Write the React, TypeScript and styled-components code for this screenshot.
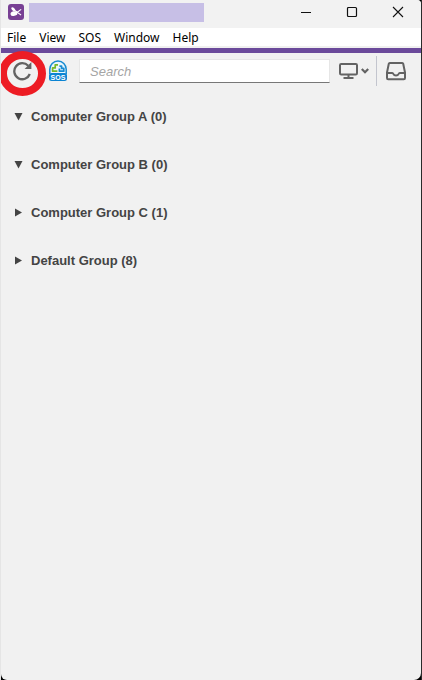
import React, { useState } from "react";
import styled, { createGlobalStyle } from "styled-components";

const GlobalStyle = createGlobalStyle`
  * { box-sizing: border-box; }
  body { margin: 0; background: #000; }
  button, input { font: inherit; color: inherit; }
`;

const Desktop = styled.div`
  min-height: 100vh;
  display: flex;
  background: #000;
  border-left: 1px solid #e5e5e5;
  border-right: 1px solid #2b2b2b;
`;

const AppWindow = styled.div`
  flex: 1;
  min-width: 0;
  display: flex;
  flex-direction: column;
  overflow: hidden;
  background: #f1f1f1;
  border-radius: 0 4px 7px 6px;
  font-family: "Liberation Sans", Arial, sans-serif;
  font-size: 13px;
  color: #444;
`;

const TitleBar = styled.header`
  display: flex;
  align-items: flex-start;
  height: 28px;
  padding-left: 7px;
  background: #f2f2f2;
`;

const AppLogo = styled.svg`
  flex: none;
  width: 16px;
  height: 16px;
  margin-top: 4px;
`;

const TitleMask = styled.div`
  flex: 0 1 175px;
  height: 19px;
  margin: 3px auto 0 5px;
  background: #c7bfe6;
`;

const CaptionButton = styled.button`
  flex: none;
  display: grid;
  place-items: center;
  width: 46px;
  height: 24px;
  padding: 0;
  border: 0;
  background: transparent;
  color: #111;
`;

const MenuBar = styled.nav`
  display: flex;
  gap: 13px;
  height: 20px;
  padding-left: 6px;
  background: #fff;
  border-bottom: 2px solid #f0f0f0;
`;

const MenuButton = styled.button`
  padding: 2px 0 0;
  border: 0;
  background: transparent;
  color: #000;
  font: 12px/16px "Noto Sans", "Open Sans", sans-serif;
`;

const AccentLine = styled.div`
  height: 5px;
  background: #6b4a9b;
`;

const Toolbar = styled.div`
  display: flex;
  align-items: center;
  height: 36px;
  padding: 0 13px 0 10px;
`;

const ToolButton = styled.button<{ $width: number }>`
  position: relative;
  flex: none;
  display: flex;
  align-items: center;
  justify-content: center;
  gap: 3px;
  width: ${(p) => p.$width}px;
  height: 30px;
  padding: 0;
  border: 0;
  background: transparent;
  color: #636363;
  & + & { margin-left: 6px; }
`;

const HighlightRing = styled.svg`
  position: absolute;
  left: -13px;
  top: -7px;
  width: 50px;
  height: 50px;
  pointer-events: none;
`;

const SearchBox = styled.input`
  flex: 1;
  min-width: 0;
  height: 24px;
  margin: 0 8px 0 4px;
  padding: 0 10px;
  border: 1px solid #e6e6e6;
  border-bottom-color: #777;
  border-radius: 0;
  background: #fff;
  outline: 0;
  &::placeholder { color: #a5a5a5; opacity: 1; font-style: italic; }
`;

const Divider = styled.div`
  width: 1px;
  height: 30px;
  margin: 0 7px 0 6px;
  background: #c3c5ce;
`;

const GroupList = styled.ul`
  flex: 1;
  margin: 0;
  padding: 3px 0;
  list-style: none;
`;

const GroupRow = styled.button`
  display: flex;
  align-items: center;
  gap: 8px;
  width: 100%;
  height: 48px;
  padding: 0 13px;
  border: 0;
  background: transparent;
  font-weight: bold;
  text-align: left;
`;

const Arrow = styled.svg`
  flex: none;
  width: 9px;
  height: 9px;
  fill: #444;
`;

const menus = ["File", "View", "SOS", "Window", "Help"];

const initialGroups = [
  { name: "Computer Group A", count: 0, open: true },
  { name: "Computer Group B", count: 0, open: true },
  { name: "Computer Group C", count: 1, open: false },
  { name: "Default Group", count: 8, open: false },
];

function Logo() {
  return (
    <AppLogo viewBox="0 0 16 16" aria-hidden="true">
      <rect width="16" height="16" rx="3" fill="#784094" />
      <ellipse cx="5.3" cy="5.2" rx="2.4" ry="1.4" transform="rotate(42 5.3 5.2)" fill="#fff" />
      <ellipse cx="6" cy="9.6" rx="3.5" ry="2.3" transform="rotate(-14 6 9.6)" fill="#fff" />
      <path d="M6.5 6.2l2.8 2L12.8 5.6M9.3 8.4l3.4 2.4" fill="none" stroke="#fff" strokeWidth="1.1" strokeLinecap="round" />
    </AppLogo>
  );
}

function RefreshIcon() {
  return (
    <svg width="20" height="20" viewBox="0 0 20 20" aria-hidden="true">
      <path d="M15.2 4.8A8 8 0 1 0 16.8 13" fill="none" stroke="currentColor" strokeWidth="2.3" />
      <path d="M18.4 1v7H11.6z" fill="currentColor" />
    </svg>
  );
}

function SosIcon() {
  return (
    <svg width="20" height="22" viewBox="0 0 20 22" aria-hidden="true">
      <path d="M1.8 14V9.3a8.2 8.2 0 0 1 16.4 0V14" fill="#e9f5fc" stroke="#168bd2" strokeWidth="1.5" />
      <path d="M10 4.8H7.2v3.1H4.6v3.3H9.4" fill="none" stroke="#76b82a" strokeWidth="1.7" strokeLinejoin="round" />
      <path d="M11.4 6.2h2.2v2.2h2.2v2.8h-4.4V8.6" fill="none" stroke="#168bd2" strokeWidth="1.7" strokeLinejoin="round" />
      <rect x="1" y="13" width="18" height="8" rx="2.5" fill="#0b84d3" />
      <text x="10" y="19.6" textAnchor="middle" fontFamily="Liberation Sans, sans-serif" fontWeight="bold" fontSize="7" fill="#fff">SOS</text>
    </svg>
  );
}

function MonitorIcon() {
  return (
    <svg width="19" height="18" viewBox="0 0 19 18" aria-hidden="true">
      <rect x="1" y="2" width="17" height="10.5" rx="1.2" fill="none" stroke="currentColor" strokeWidth="2" />
      <path d="M9.5 12v4M4.5 16h10" fill="none" stroke="currentColor" strokeWidth="2" />
    </svg>
  );
}

function ChevronIcon() {
  return (
    <svg width="8" height="6" viewBox="0 0 8 6" aria-hidden="true">
      <path d="M.8 1L4 4.2 7.2 1" fill="none" stroke="currentColor" strokeWidth="2.2" />
    </svg>
  );
}

function InboxIcon() {
  return (
    <svg width="22" height="20" viewBox="0 0 22 20" aria-hidden="true">
      <path d="M4.8 2h12.4a1 1 0 0 1 1 .8L20 11.5V17a1.2 1.2 0 0 1-1.2 1.2H3.2A1.2 1.2 0 0 1 2 17v-5.5L3.8 2.8a1 1 0 0 1 1-.8z" fill="none" stroke="currentColor" strokeWidth="2" strokeLinejoin="round" />
      <path d="M2 12h5.3c.6 0 .8.4 1 .9a3 3 0 0 0 5.4 0c.2-.5.4-.9 1-.9H20" fill="none" stroke="currentColor" strokeWidth="2" />
    </svg>
  );
}

export default function App() {
  const [groups, setGroups] = useState(initialGroups);
  const toggle = (name: string) =>
    setGroups((list) => list.map((g) => (g.name === name ? { ...g, open: !g.open } : g)));

  return (
    <>
      <GlobalStyle />
      <Desktop>
        <AppWindow>
          <TitleBar>
            <Logo />
            <TitleMask />
            <CaptionButton aria-label="Minimize">
              <svg width="12" height="12" viewBox="0 0 12 12">
                <path d="M1 6.5h10" stroke="currentColor" />
              </svg>
            </CaptionButton>
            <CaptionButton aria-label="Maximize">
              <svg width="12" height="12" viewBox="0 0 12 12">
                <rect x="1.5" y="1.5" width="9" height="9" rx="1" fill="none" stroke="currentColor" strokeWidth="1.2" />
              </svg>
            </CaptionButton>
            <CaptionButton aria-label="Close">
              <svg width="12" height="12" viewBox="0 0 12 12">
                <path d="M1 1l10 10M11 1L1 11" stroke="currentColor" strokeWidth="1.1" />
              </svg>
            </CaptionButton>
          </TitleBar>
          <MenuBar>
            {menus.map((m) => (
              <MenuButton key={m}>{m}</MenuButton>
            ))}
          </MenuBar>
          <AccentLine />
          <Toolbar>
            <ToolButton $width={24} aria-label="Refresh">
              <RefreshIcon />
              <HighlightRing viewBox="0 0 50 50" aria-hidden="true">
                <ellipse cx="24.5" cy="24.5" rx="19.5" ry="18.5" fill="none" stroke="#ed1c24" strokeWidth="8" />
              </HighlightRing>
            </ToolButton>
            <ToolButton $width={34} aria-label="SOS session">
              <SosIcon />
            </ToolButton>
            <SearchBox type="text" placeholder="Search" aria-label="Search" />
            <ToolButton $width={32} aria-label="Display filter">
              <MonitorIcon />
              <ChevronIcon />
            </ToolButton>
            <Divider />
            <ToolButton $width={24} aria-label="Inbox">
              <InboxIcon />
            </ToolButton>
          </Toolbar>
          <GroupList>
            {groups.map((g) => (
              <li key={g.name}>
                <GroupRow aria-expanded={g.open} onClick={() => toggle(g.name)}>
                  <Arrow viewBox="0 0 9 9" aria-hidden="true">
                    <path d={g.open ? "M.5 1h8L4.5 8.5z" : "M1 .5v8l7-4z"} />
                  </Arrow>
                  {`${g.name} (${g.count})`}
                </GroupRow>
              </li>
            ))}
          </GroupList>
        </AppWindow>
      </Desktop>
    </>
  );
}
